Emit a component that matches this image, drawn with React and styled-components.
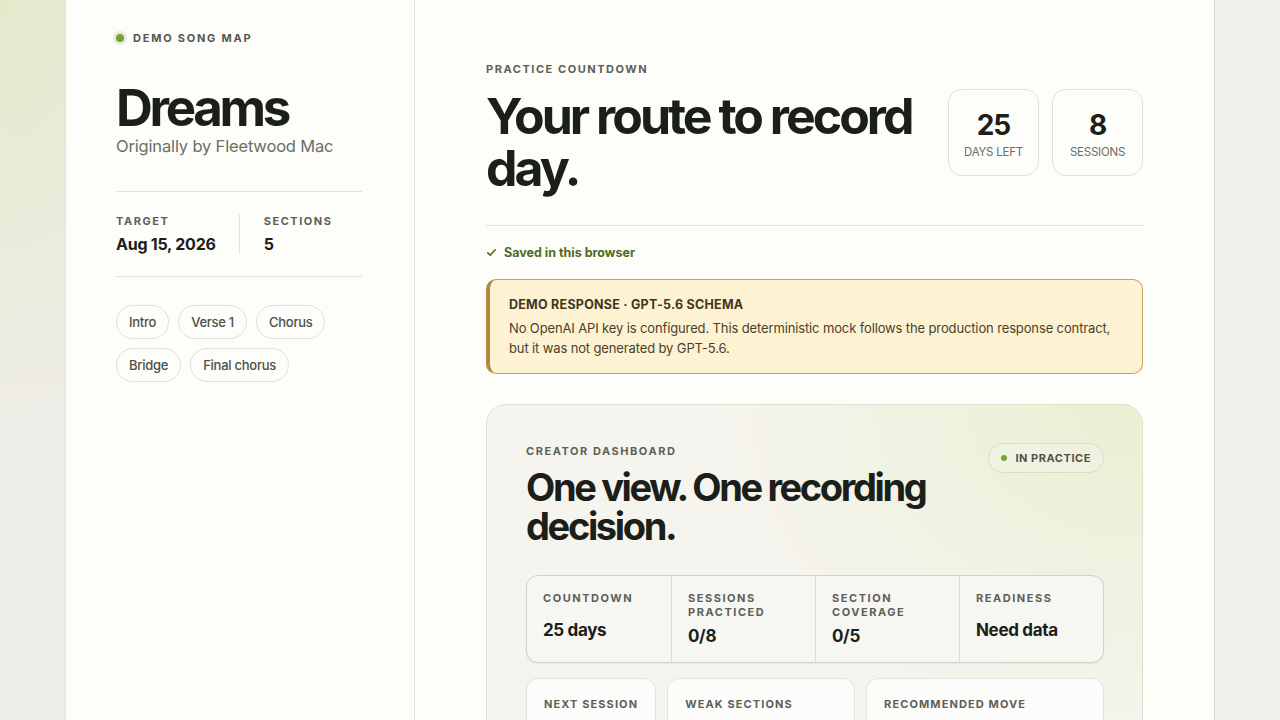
import React from "react";
import styled, { createGlobalStyle } from "styled-components";

const Global = createGlobalStyle`
  * { box-sizing: border-box; }
  html, body { margin: 0; padding: 0; }
  body {
    font-family: Inter, "Noto Sans", "Liberation Sans", sans-serif;
    color: #1b2119;
    min-height: 100vh;
    background:
      radial-gradient(ellipse 260px 420px at 0 0, rgba(226, 234, 200, 0.9), rgba(226, 234, 200, 0) 100%),
      linear-gradient(90deg, #efede7 0%, #eae8e2 50%, #f1efe9 100%);
  }
`;

const Shell = styled.div`
  max-width: 1150px;
  margin: 0 auto;
  min-height: 100vh;
  display: grid;
  grid-template-columns: 349px 1fr;
  background: #fdfdfa;
  border-left: 1px solid #e4e3dc;
  border-right: 1px solid #d9d8d0;
`;

const Sidebar = styled.aside`
  border-right: 1px solid #e4e3dc;
  padding: 31px 52px 40px 50px;
  display: flex;
  flex-direction: column;
`;

const Eyebrow = styled.div`
  display: flex;
  align-items: center;
  gap: 9px;
  font-size: 11px;
  font-weight: 700;
  letter-spacing: 0.16em;
  text-transform: uppercase;
  color: ${(p) => p.$color || "#55584f"};
`;

const Dot = styled.span`
  width: 8px;
  height: 8px;
  border-radius: 50%;
  background: #7aa23a;
  box-shadow: 0 0 0 3px ${(p) => p.$halo || "#e9eedb"};
  flex: none;
`;

const SongTitle = styled.h1`
  margin: 35px 0 0;
  font-size: 51px;
  line-height: 1.1;
  font-weight: 700;
  letter-spacing: -0.065em;
  color: #1a2019;
`;

const Artist = styled.div`
  margin-top: 0;
  font-size: 16.5px;
  color: #6b6e66;
  letter-spacing: -0.01em;
`;

const Rule = styled.hr`
  border: 0;
  border-top: 1px solid #e2e2db;
  margin: ${(p) => p.$m || "0"};
`;

const Facts = styled.div`
  display: flex;
  align-items: stretch;
  padding: 22px 0 22px;
`;

const Fact = styled.div`
  display: flex;
  flex-direction: column;
  gap: 6px;
  padding-right: ${(p) => (p.$first ? "23px" : "0")};
  padding-left: ${(p) => (p.$first ? "0" : "24px")};
  border-right: ${(p) => (p.$first ? "1px solid #e2e2db" : "none")};
`;

const SmallLabel = styled.div`
  font-size: 11px;
  font-weight: 700;
  letter-spacing: ${(p) => p.$ls || "0.14em"};
  text-transform: uppercase;
  color: #5d6058;
  line-height: 14px;
  white-space: ${(p) => (p.$nowrap ? "nowrap" : "normal")};
`;

const FactValue = styled.div`
  font-size: 16px;
  font-weight: 700;
  color: #1a2019;
  letter-spacing: -0.015em;
`;

const Chips = styled.div`
  display: flex;
  flex-wrap: wrap;
  gap: 9px;
  margin-top: 28px;
`;

const Chip = styled.span`
  height: 34px;
  padding: 0 12px;
  display: inline-flex;
  align-items: center;
  border: 1px solid #e0e0d9;
  border-radius: 999px;
  font-size: 13px;
  font-weight: 500;
  color: #4d5048;
  background: #fdfdfa;
  letter-spacing: -0.02em;
`;

const Main = styled.main`
  padding: 62px 71px 40px;
  display: flex;
  flex-direction: column;
`;

const HeroRow = styled.div`
  display: flex;
  justify-content: space-between;
  align-items: flex-start;
  gap: 24px;
  margin-top: 14px;
`;

const HeroTitle = styled.h2`
  margin: 0;
  font-size: 50px;
  line-height: 52px;
  font-weight: 700;
  letter-spacing: -0.06em;
  color: #1a2019;
  max-width: 440px;
`;

const Counters = styled.div`
  display: flex;
  gap: 13px;
  margin-top: -1px;
`;

const Counter = styled.div`
  width: 91px;
  height: 87px;
  border: 1px solid #e2e2db;
  border-radius: 14px;
  display: flex;
  flex-direction: column;
  align-items: center;
  justify-content: center;
  gap: 4px;
  padding-top: 3px;
  background: #fdfdfa;
`;

const CounterNum = styled.div`
  font-size: 28px;
  font-weight: 700;
  letter-spacing: -0.04em;
  line-height: 32px;
  color: #1a2019;
`;

const CounterLabel = styled.div`
  font-size: 11.5px;
  text-transform: uppercase;
  color: #6b6e66;
  letter-spacing: -0.02em;
`;

const Saved = styled.div`
  display: flex;
  align-items: center;
  gap: 7px;
  margin-top: 19px;
  font-size: 12.5px;
  font-weight: 700;
  color: #4e6a22;
`;

const Notice = styled.div`
  margin-top: 19px;
  background: #fdf3d2;
  border: 1px solid #c9a655;
  border-left: 4px solid #b08a3c;
  border-radius: 10px;
  padding: 17px 20px 15px 19px;
`;

const NoticeTitle = styled.div`
  font-size: 12.5px;
  font-weight: 700;
  letter-spacing: 0.02em;
  color: #46341a;
  text-transform: uppercase;
`;

const NoticeBody = styled.p`
  margin: 6px 0 0;
  font-size: 13px;
  line-height: 20px;
  color: #4b3f2b;
  letter-spacing: -0.01em;
`;

const Dashboard = styled.section`
  margin-top: 30px;
  border: 1px solid #dde2cc;
  border-radius: 20px;
  padding: 39px 38px 40px 39px;
  background:
    radial-gradient(ellipse 420px 320px at 100% 0%, rgba(232, 240, 208, 0.95), rgba(232, 240, 208, 0) 100%),
    linear-gradient(180deg, #f6f4ee 0%, #f4f3ed 100%);
`;

const DashHead = styled.div`
  display: flex;
  justify-content: space-between;
  align-items: flex-start;
`;

const DashTitle = styled.h3`
  margin: 10px 0 0;
  font-size: 38px;
  line-height: 39px;
  font-weight: 700;
  letter-spacing: -0.062em;
  color: #1a2019;
  max-width: 420px;
`;

const Badge = styled.div`
  margin-top: -1px;
  height: 30px;
  padding: 0 12px 0 12px;
  display: flex;
  align-items: center;
  gap: 8px;
  border: 1px solid #d9dec4;
  border-radius: 999px;
  background: rgba(240, 243, 226, 0.8);
  font-size: 11px;
  font-weight: 700;
  letter-spacing: 0.05em;
  color: #4f5346;
`;

const BadgeDot = styled.span`
  width: 6px;
  height: 6px;
  border-radius: 50%;
  background: #7aa23a;
`;

const StatGrid = styled.div`
  margin-top: 29px;
  display: grid;
  grid-template-columns: repeat(4, 1fr);
  border: 1px solid #cfd2c6;
  border-radius: 12px;
  background: #f6f6f3;
  overflow: hidden;
  box-shadow: 0 1px 2px rgba(40, 50, 30, 0.06);
`;

const Stat = styled.div`
  height: 86px;
  padding: 15px 16px 0;
  border-left: ${(p) => (p.$first ? "none" : "1px solid #dadbd3")};
  display: flex;
  flex-direction: column;
`;

const StatValue = styled.div`
  margin-top: ${(p) => (p.$tall ? "7px" : "15px")};
  font-size: 17px;
  font-weight: 700;
  letter-spacing: -0.02em;
  color: #1a2019;
`;

const Cards = styled.div`
  margin-top: 15px;
  display: grid;
  grid-template-columns: 130fr 188fr 238fr;
  gap: 11px;
`;

const Card = styled.div`
  min-height: 120px;
  border: 1px solid #e4e4dc;
  border-radius: 12px;
  background: #fcfcfa;
  padding: 18px 17px;
`;

const Check = () => (
  <svg width="11" height="11" viewBox="0 0 12 12" fill="none">
    <path d="M2 6.4 4.6 9 10 3" stroke="#4e6a22" strokeWidth="1.8" strokeLinecap="round" strokeLinejoin="round" />
  </svg>
);

const sections = ["Intro", "Verse 1", "Chorus", "Bridge", "Final chorus"];

export default function App() {
  return (
    <>
      <Global />
      <Shell>
        <Sidebar>
          <Eyebrow>
            <Dot />
            Demo song map
          </Eyebrow>
          <SongTitle>Dreams</SongTitle>
          <Artist>Originally by Fleetwood Mac</Artist>
          <Rule $m="35px 0 0" />
          <Facts>
            <Fact $first>
              <SmallLabel>Target</SmallLabel>
              <FactValue>Aug 15, 2026</FactValue>
            </Fact>
            <Fact>
              <SmallLabel>Sections</SmallLabel>
              <FactValue>5</FactValue>
            </Fact>
          </Facts>
          <Rule />
          <Chips>
            {sections.map((s) => (
              <Chip key={s}>{s}</Chip>
            ))}
          </Chips>
        </Sidebar>

        <Main>
          <SmallLabel>Practice countdown</SmallLabel>
          <HeroRow>
            <HeroTitle>Your route to record day.</HeroTitle>
            <Counters>
              <Counter>
                <CounterNum>25</CounterNum>
                <CounterLabel>Days left</CounterLabel>
              </Counter>
              <Counter>
                <CounterNum>8</CounterNum>
                <CounterLabel>Sessions</CounterLabel>
              </Counter>
            </Counters>
          </HeroRow>
          <Rule $m="31px 0 0" />
          <Saved>
            <Check />
            Saved in this browser
          </Saved>
          <Notice>
            <NoticeTitle>Demo response · GPT-5.6 schema</NoticeTitle>
            <NoticeBody>
              No OpenAI API key is configured. This deterministic mock follows the production response contract,
              but it was not generated by GPT-5.6.
            </NoticeBody>
          </Notice>

          <Dashboard>
            <DashHead>
              <div>
                <SmallLabel>Creator dashboard</SmallLabel>
                <DashTitle>One view. One recording decision.</DashTitle>
              </div>
              <Badge>
                <BadgeDot />
                IN PRACTICE
              </Badge>
            </DashHead>
            <StatGrid>
              <Stat $first>
                <SmallLabel>Countdown</SmallLabel>
                <StatValue>25 days</StatValue>
              </Stat>
              <Stat>
                <SmallLabel>Sessions practiced</SmallLabel>
                <StatValue $tall>0/8</StatValue>
              </Stat>
              <Stat>
                <SmallLabel>Section coverage</SmallLabel>
                <StatValue $tall>0/5</StatValue>
              </Stat>
              <Stat>
                <SmallLabel>Readiness</SmallLabel>
                <StatValue>Need data</StatValue>
              </Stat>
            </StatGrid>
            <Cards>
              <Card>
                <SmallLabel $ls="0.1em" $nowrap>Next session</SmallLabel>
              </Card>
              <Card>
                <SmallLabel $ls="0.1em" $nowrap>Weak sections</SmallLabel>
              </Card>
              <Card>
                <SmallLabel $ls="0.1em" $nowrap>Recommended move</SmallLabel>
              </Card>
            </Cards>
          </Dashboard>
        </Main>
      </Shell>
    </>
  );
}
